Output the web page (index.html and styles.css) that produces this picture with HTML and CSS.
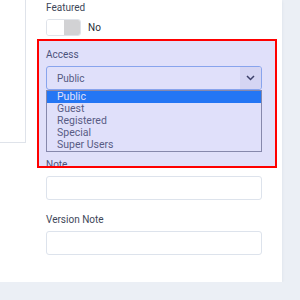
FILE: index.html
```html
<!DOCTYPE html>
<html lang="en">

<head>
    <meta charset="UTF-8">
    <meta name="viewport" content="width=device-width, initial-scale=1.0">
    <title>Edit Article | Options</title>
    <link rel="stylesheet" href="styles.css">
</head>

<body>
    <div class="card">
        <!-- left column, mostly scrolled out of view -->
        <aside class="side-panel"></aside>

        <div class="form-col">
            <div class="field field-toggle">
                <label>Featured</label>
                <div class="switch-row">
                    <span class="switch">
                        <span class="switch-on"></span>
                        <span class="switch-off"></span>
                    </span>
                    <span class="switch-text">No</span>
                </div>
            </div>

            <div class="field field-open">
                <label for="access">Access</label>
                <div class="select" id="access">
                    <span class="select-value">Public</span>
                    <span class="select-arrow">
                        <svg width="9" height="6" viewBox="0 0 9 6">
                            <path d="M1 1l3.5 3.5L8 1" fill="none" stroke="#2b3044" stroke-width="1.5" />
                        </svg>
                    </span>
                </div>
                <ul class="listbox">
                    <li class="selected">Public</li>
                    <li>Guest</li>
                    <li>Registered</li>
                    <li>Special</li>
                    <li>Super Users</li>
                </ul>
                <!-- inspector highlight drawn over the field -->
                <div class="highlight"></div>
            </div>

            <div class="field">
                <label for="note">Note</label>
                <input type="text" id="note">
            </div>

            <div class="field">
                <label for="version-note">Version Note</label>
                <input type="text" id="version-note">
            </div>
        </div>
    </div>
</body>

</html>
```
FILE: styles.css
```css
* {
    box-sizing: border-box;
}

body {
    margin: 0;
    background-color: #ebeff5;
    font-family: Roboto, "Liberation Sans", Arial, sans-serif;
    font-size: 10px;
}

.card {
    display: flex;
    gap: 20px;
    width: 282px;
    height: 282px;
    padding-right: 20px;
    background-color: #fff;
    box-shadow: 0 1px 3px rgba(30, 50, 80, 0.08);
}

.side-panel {
    width: 26px;
    height: 143px;
    border-right: 1px solid #dfe3ea;
    border-bottom: 1px solid #dfe3ea;
}

.form-col {
    width: 216px;
    padding-top: 2px;
}

.field {
    margin-bottom: 14px;
}

.field-toggle {
    margin-bottom: 13px;
}

.field-open {
    position: relative;
    margin-bottom: 7px;
}

label {
    display: block;
    line-height: 12px;
    margin-bottom: 5px;
    color: #3e4759;
}

.switch-row {
    display: flex;
    align-items: center;
}

.switch {
    display: flex;
    width: 35px;
    height: 17px;
    border: 1px solid #dfe3ea;
    border-radius: 3px;
    overflow: hidden;
}

.switch-on {
    flex: 1;
    background-color: #fff;
}

.switch-off {
    flex: 1;
    background-color: #d2d2d4;
}

.switch-text {
    margin-left: 7px;
    color: #2a2d36;
}

.select {
    display: flex;
    align-items: center;
    height: 24px;
    border: 1px solid #8db1ee;
    border-radius: 3px;
    background-color: #fff;
    overflow: hidden;
}

.select-value {
    flex: 1;
    padding-left: 10px;
    color: #4a5162;
}

.select-arrow {
    display: flex;
    align-items: center;
    justify-content: center;
    width: 21px;
    height: 100%;
    background-color: #f1f1f6;
}

.listbox {
    list-style: none;
    margin: 0;
    padding: 0;
    border: 1px solid #8a8d9a;
    background-color: #fff;
}

.listbox li {
    height: 12px;
    line-height: 12px;
    padding-left: 10px;
    font-size: 10.5px;
    color: #4f5466;
}

.listbox li.selected {
    background-color: #0b76f7;
    color: #fff;
}

.highlight {
    position: absolute;
    top: -10px;
    bottom: -16px;
    left: -9px;
    right: -15px;
    border: 2px solid #ff0000;
    background-color: rgba(120, 120, 235, 0.23);
    z-index: 2;
}

input {
    display: block;
    width: 100%;
    height: 24px;
    margin: 0;
    border: 1px solid #dde3ec;
    border-radius: 3px;
    background-color: #fff;
}
```
